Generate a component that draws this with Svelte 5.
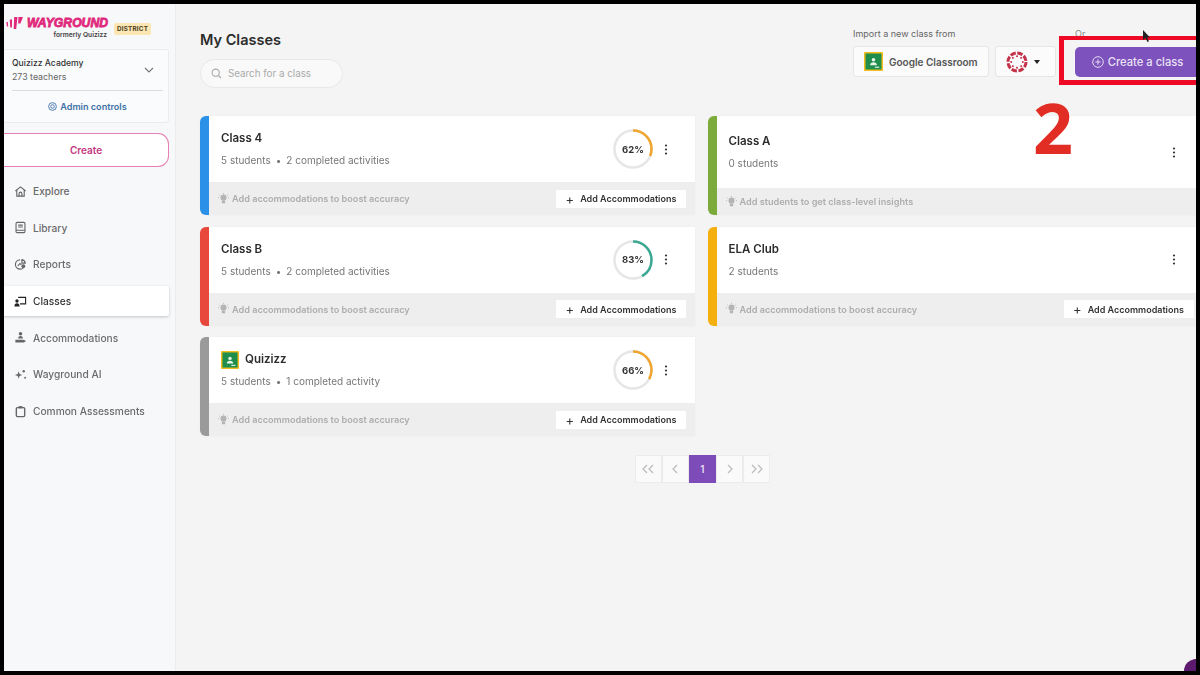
<script>
  const nav = [
    { label: 'Explore', icon: 'home' },
    { label: 'Library', icon: 'book' },
    { label: 'Reports', icon: 'report' },
    { label: 'Classes', icon: 'classes', active: true },
    { label: 'Accommodations', icon: 'acc' },
    { label: 'Wayground AI', icon: 'ai' },
    { label: 'Common Assessments', icon: 'clip' }
  ];
  const left = [
    { name: 'Class 4', color: '#2b90e8', meta: ['5 students', '2 completed activities'], pct: 62, ring: '#f0a52e', hint: 'Add accommodations to boost accuracy', add: true },
    { name: 'Class B', color: '#e8483c', meta: ['5 students', '2 completed activities'], pct: 83, ring: '#3aa893', hint: 'Add accommodations to boost accuracy', add: true },
    { name: 'Quizizz', color: '#9a9a9a', meta: ['5 students', '1 completed activity'], pct: 66, ring: '#f0a52e', hint: 'Add accommodations to boost accuracy', add: true, gc: true }
  ];
  const right = [
    { name: 'Class A', color: '#7cab3c', meta: ['0 students'], hint: 'Add students to get class-level insights', add: false },
    { name: 'ELA Club', color: '#f4b00e', meta: ['2 students'], hint: 'Add accommodations to boost accuracy', add: true }
  ];
  const circ = 2 * Math.PI * 18.5;
  const canvasDots = [0, 45, 90, 135, 180, 225, 270, 315];
</script>

{#snippet gcIcon(size)}
  <svg width={size} height={size} viewBox="0 0 20 20" class="gc">
    <rect width="20" height="20" rx="1" fill="#f2bd1d" />
    <rect x="1.6" y="1.6" width="16.8" height="16.8" fill="#1f8e4d" />
    <circle cx="10" cy="8.2" r="1.9" fill="#e8f3ea" />
    <path d="M6.4 14c0-2.2 1.6-3.2 3.6-3.2s3.6 1 3.6 3.2z" fill="#e8f3ea" />
    <rect x="11.5" y="15.4" width="4.5" height="1.2" fill="#e8f3ea" />
  </svg>
{/snippet}

{#snippet navIcon(k)}
  <svg width="13" height="13" viewBox="0 0 14 14" fill="none" stroke={k === 'classes' ? '#222' : '#666'} stroke-width="1.2">
    {#if k === 'home'}
      <path d="M1.5 6.5 7 2l5.5 4.5M3 5.5V12h8V5.5" /><path d="M5.5 12V9.2a1.5 1.5 0 0 1 3 0V12" />
    {:else if k === 'book'}
      <rect x="2.2" y="1.5" width="9.6" height="11" rx="1.2" /><path d="M4.5 4.5h5M4.5 6.5h5M2.2 10h9.6" />
    {:else if k === 'report'}
      <path d="M6.5 2a5 5 0 1 0 5 5.6" /><path d="M4 8.5 6.5 6l1.5 1.5" /><circle cx="10" cy="8.8" r="2" fill="#666" stroke="none" /><path d="M8.5 1.8A4.5 4.5 0 0 1 12.2 5.500H8.500z" />
    {:else if k === 'classes'}
      <path d="M4.500 2.500h8v7h-6" /><circle cx="3.200" cy="6.500" r="1.800" fill="#222" stroke="none" /><path d="M.5 12.500c0-2.500 1-3.500 2.700-3.500s2.800 1 2.800 3.500z" fill="#222" stroke="none" />
    {:else if k === 'acc'}
      <circle cx="7" cy="3" r="1.900" fill="#666" stroke="none" /><path d="M4.500 8c0-1.600 1.100-2.500 2.500-2.500S9.500 6.400 9.500 8z" fill="#666" stroke="none" /><path d="M1.500 9.500h8l3 .8c0 1.500-1.500 2.200-3 2.200h-8z" fill="#666" stroke="none" />
    {:else if k === 'ai'}
      <path d="M5 3.500 6 6.500l3 1-3 1-1 3-1-3-3-1 3-1z" fill="#666" stroke="none" /><circle cx="10.500" cy="3.500" r="1.300" fill="#666" stroke="none" /><circle cx="12" cy="10.500" r="1" fill="#666" stroke="none" />
    {:else}
      <rect x="2.500" y="2.800" width="9" height="9.700" rx="1.200" stroke-width="1.500" /><rect x="5" y="1.200" width="4" height="2.400" fill="#666" stroke="none" />
    {/if}
  </svg>
{/snippet}

{#snippet card(c)}
  <article class="card" style="--accent:{c.color}">
    <div class="top">
      <div class="info">
        <h3 class:withgc={c.gc}>{#if c.gc}{@render gcIcon(18)}{/if}{c.name}</h3>
        <p>{c.meta[0]}{#if c.meta[1]}<span class="dot">•</span>{c.meta[1]}{/if}</p>
      </div>
      {#if c.pct}
        <div class="ring">
          <svg width="42" height="42" viewBox="0 0 42 42">
            <circle cx="21" cy="21" r="18.500" fill="none" stroke="#e6e6e6" stroke-width="2.500" />
            <circle cx="21" cy="21" r="18.500" fill="none" stroke={c.ring} stroke-width="2.500" stroke-dasharray="{circ * c.pct / 200} {circ}" transform="rotate(-90 21 21)" />
          </svg>
          <span>{c.pct}%</span>
        </div>
      {/if}
      <svg class="kebab" width="4" height="11" viewBox="0 0 4 11"><circle cx="2" cy="1.500" r="1.100" /><circle cx="2" cy="5.500" r="1.100" /><circle cx="2" cy="9.500" r="1.100" /></svg>
    </div>
    <div class="foot" class:short={!c.add}>
      <svg width="11" height="12" viewBox="0 0 12 13" fill="#b4b4b4"><circle cx="6" cy="5" r="3.300" /><rect x="4.200" y="8.500" width="3.600" height="2.600" rx=".6" /><path d="M6 0v1M1 1.800l.8.700M11 1.800l-.8.700M0 5h1M11 5h1" stroke="#b4b4b4" /></svg>
      <span class="hint">{c.hint}</span>
      {#if c.add}
        <button class="add"><span class="plus">+</span>Add Accommodations</button>
      {/if}
    </div>
  </article>
{/snippet}

<div class="frame">
  <aside>
    <div class="logo">
      <svg width="17" height="14" viewBox="0 0 17 14" fill="#e0287c"><path d="M.3 6h1.500l.4 4.500H.9zM3.800 3.500h2.300l-.2 8H4.200zM8.200 1h3.300l-1.300 12H7.700zM12.500 1H17l-2.600 6.500h-2.300z" /></svg>
      <div class="wordmark">
        <strong>WAYGROUND</strong>
        <small>formerly Quizizz</small>
      </div>
      <span class="district">DISTRICT</span>
    </div>

    <div class="org">
      <div class="orgrow">
        <div>
          <div class="orgname">Quizizz Academy</div>
          <div class="orgsub">273 teachers</div>
        </div>
        <svg width="10" height="6" viewBox="0 0 10 6" fill="none" stroke="#777" stroke-width="1.100"><path d="M1 1l4 4 4-4" /></svg>
      </div>
      <div class="admin">
        <svg width="9" height="9" viewBox="0 0 10 10" fill="none" stroke="#3f72a8" stroke-width="1"><circle cx="5" cy="5" r="4.300" /><circle cx="5" cy="5" r="2" /></svg>
        Admin controls
      </div>
    </div>

    <button class="create">Create</button>

    <nav>
      {#each nav as n}
        <div class="navitem" class:active={n.active}>
          {@render navIcon(n.icon)}
          <span>{n.label}</span>
        </div>
      {/each}
    </nav>
  </aside>

  <main>
    <header>
      <div class="titlecol">
        <h1>My Classes</h1>
        <div class="search">
          <svg width="11" height="11" viewBox="0 0 11 11" fill="none" stroke="#aaa" stroke-width="1.100"><circle cx="4.700" cy="4.700" r="3.600" /><path d="M7.500 7.500 10 10" /></svg>
          Search for a class
        </div>
      </div>
      <div class="actions">
        <div class="impcol">
          <div class="caption">Import a new class from</div>
          <div class="imports">
            <button class="gcbtn">{@render gcIcon(19)}Google Classroom</button>
            <button class="canvas">
              <svg width="22" height="22" viewBox="0 0 22 22">
                <circle cx="11" cy="11" r="9" fill="none" stroke="#c4324a" stroke-width="3" stroke-dasharray="5.500 1.570" />
                {#each canvasDots as a}
                  <circle cx="11" cy="5.200" r="1" fill="#c4324a" transform="rotate({a} 11 11)" />
                {/each}
              </svg>
              <i class="caret"></i>
            </button>
          </div>
        </div>
        <div class="orcol">
          <div class="caption or">Or</div>
          <button class="primary">
            <svg width="12" height="12" viewBox="0 0 12 12" fill="none" stroke="#e6dcf3" stroke-width="1"><circle cx="6" cy="6" r="5.300" /><path d="M6 3.300v5.400M3.300 6h5.400" /></svg>
            Create a class
          </button>
        </div>
      </div>
    </header>

    <div class="grid">
      <div class="col">
        {#each left as c}{@render card(c)}{/each}
      </div>
      <div class="col">
        {#each right as c}{@render card(c)}{/each}
      </div>
    </div>

    <div class="pager">
      <button>
        <svg width="14" height="10" viewBox="0 0 14 10" fill="none" stroke="#bbb" stroke-width="1.200"><path d="M6 1 2 5l4 4M12 1 8 5l4 4" /></svg>
      </button>
      <button>
        <svg width="8" height="10" viewBox="0 0 8 10" fill="none" stroke="#bbb" stroke-width="1.200"><path d="M6 1 2 5l4 4" /></svg>
      </button>
      <button class="current">1</button>
      <button>
        <svg width="8" height="10" viewBox="0 0 8 10" fill="none" stroke="#bbb" stroke-width="1.200"><path d="m2 1 4 4-4 4" /></svg>
      </button>
      <button>
        <svg width="14" height="10" viewBox="0 0 14 10" fill="none" stroke="#bbb" stroke-width="1.200"><path d="m2 1 4 4-4 4M8 1l4 4-4 4" /></svg>
      </button>
    </div>

    <div class="highlight"></div>
    <div class="step">2</div>
    <svg class="cursor" width="9" height="13" viewBox="0 0 9 13"><path d="M0 0v10l2.500-2 2 4 1.500-.8-2-3.800H7z" fill="#222" /></svg>
    <div class="bubble"></div>
  </main>
</div>

<style>
  :global(body) { margin: 0; background: #000; }
  :global(*) { box-sizing: border-box; }
  .frame {
    width: 1200px; height: 675px; background: #000;
    padding: 4px; display: flex; overflow: hidden;
    font-family: Inter, "Liberation Sans", sans-serif;
    color: #333;
  }
  aside {
    width: 172px; flex: none; background: #f7f8fa;
    border-right: 1px solid #ececec; padding-right: 6px;
    display: flex; flex-direction: column;
    filter: blur(.35px);
  }
  .logo { display: flex; align-items: flex-start; height: 45px; padding: 12px 0 0 2px; }
  .wordmark { display: flex; flex-direction: column; margin-left: 4px; }
  .wordmark strong {
    font: italic 900 12.200px/14px "Liberation Sans", sans-serif; color: #e0287c;
    -webkit-text-stroke: .8px #e0287c;
  }
  .wordmark small { font-size: 6.700px; font-weight: 600; color: #444; line-height: 9px; text-align: right; padding-right: 1px; margin-top: 1px; }
  .district {
    font-size: 6.300px; font-weight: 700; color: #4a3c20; background: #fbe6b4;
    border-radius: 2px; padding: 2px 3px; margin: 7px 0 0 6px; letter-spacing: .2px;
  }
  .org {
    background: #fafbfc; border: 1px solid #ececef; border-left: 0;
    border-radius: 0 3px 3px 0; height: 74px; padding: 0 5px 0 8px;
  }
  .orgrow {
    display: flex; justify-content: space-between; align-items: center;
    height: 41px; border-bottom: 1px solid #ddd; padding-right: 9px;
  }
  .orgname { font-size: 8.600px; color: #333; font-weight: 500; line-height: 13px; }
  .orgsub { font-size: 8.800px; color: #666; line-height: 14px; }
  .admin {
    display: flex; align-items: center; justify-content: center; gap: 3px;
    height: 31px; font-size: 9.100px; font-weight: 600; color: #3f72a8;
  }
  .create {
    height: 34px; margin-top: 10px; background: #fff;
    border: 1px solid #e77fb4; border-left: 0; border-radius: 0 11px 11px 0;
    font: 600 10px Inter, sans-serif; color: #c3387f;
  }
  nav { display: flex; flex-direction: column; margin-top: 9px; }
  .navitem {
    height: 30px; margin-bottom: 6.700px; display: flex; align-items: center; gap: 6px;
    padding-left: 10px; font-size: 10.200px; color: #6b6b6b; font-weight: 500;
  }
  .navitem.active {
    background: #fff; color: #333; border-radius: 0 2px 2px 0;
    box-shadow: 0 1px 3px rgba(0,0,0,.22);
  }
  main {
    position: relative; flex: 1; min-width: 0; background: #f4f4f4;
    padding: 0 0 0 24px; overflow: hidden;
  }
  header { display: flex; justify-content: space-between; height: 112px; }
  .titlecol { padding-top: 27px; }
  h1 { margin: 0; font-size: 14.500px; line-height: 18px; font-weight: 600; color: #2c2c2c; }
  .search {
    margin-top: 10px; width: 143px; height: 29px; background: #f9f9f9;
    border: 1px solid #e8e8e8; border-radius: 15px; display: flex; align-items: center;
    gap: 6px; padding-left: 10px; font-size: 9.800px; color: #aaa;
  }
  .actions { display: flex; gap: 19px; padding-top: 25px; margin-right: -6px; }
  .caption { font-size: 9px; color: #666; line-height: 10px; height: 17px; }
  .or { height: 18px; color: #888; }
  .imports { display: flex; gap: 6px; }
  .gcbtn, .canvas {
    height: 31px; background: #fbfbfb; border: 1px solid #e6e6e6; border-radius: 3px;
    display: flex; align-items: center;
  }
  .gcbtn { width: 136px; gap: 6px; padding: 0 0 0 10px; font: 600 10px Inter, sans-serif; color: #555; }
  .canvas { width: 61px; padding: 0 0 0 10px; gap: 6px; }
  .caret { width: 0; height: 0; border: 3.500px solid transparent; border-top: 4px solid #222; border-bottom: 0; }
  .primary {
    width: 127px; height: 30px; background: #7d52bd; color: #e9e1f4; border: 0; border-radius: 5px 0 0 5px;
    display: flex; align-items: center; justify-content: center; gap: 4px; padding: 0 2px 0 0;
    font: 500 11.200px Inter, sans-serif;
  }
  .grid { display: grid; grid-template-columns: 495px 495px; column-gap: 12.500px; }
  .col { display: flex; flex-direction: column; gap: 11.500px; }
  .card {
    height: 99px; background: #fff; border-left: 9px solid var(--accent); border-radius: 6px 0 0 6px;
    display: flex; flex-direction: column; overflow: hidden;
    box-shadow: 0 0 2px rgba(0,0,0,.06);
    filter: blur(.3px);
  }
  .top { flex: 1; display: flex; align-items: center; padding: 0 28px 0 12px; }
  .info { flex: 1; }
  h3 { margin: 0; height: 15px; font-size: 11.500px; font-weight: 600; line-height: 15px; color: #2c2c2c; display: flex; align-items: center; }
  h3.withgc { gap: 6px; }
  .card p { margin: 8px 0 0; font-size: 10px; line-height: 13px; color: #777; }
  .dot { margin: 0 5px; }
  .ring { position: relative; width: 42px; height: 42px; margin-right: 9px; }
  .ring span {
    position: absolute; inset: 0; display: flex; align-items: center; justify-content: center;
    font-size: 9.500px; font-weight: 700; color: #333;
  }
  .kebab { fill: #333; margin-left: 1px; margin-right: -1px; }
  .foot {
    height: 33px; flex: none; background: #eeeeee; display: flex; align-items: center;
    padding: 0 9px; gap: 3px;
  }
  .foot.short { height: 27px; }
  .hint { flex: 1; font-size: 9.150px; font-weight: 600; color: #adadad; }
  .add {
    width: 130px; height: 18px; background: #fff; border: 0; border-radius: 1px; display: flex;
    align-items: center; justify-content: center; gap: 6px;
    font: 600 9px Inter, sans-serif; color: #333; padding: 0;
  }
  .plus { font-size: 13px; font-weight: 400; line-height: 10px; }
  .pager { display: flex; margin: 19px 0 0 434.500px; }
  .pager button {
    width: 27.200px; height: 28px; padding: 0; background: #fafafa; border: 1px solid #ececec;
    display: flex; align-items: center; justify-content: center;
    font: 600 10px Inter, sans-serif;
  }
  .pager .current { background: #7d4cb8; border-color: #7d4cb8; color: #e4d9f0; }
  .highlight {
    position: absolute; left: 883px; top: 32px; width: 137px; height: 49px;
    border: 5px solid #ee0a24; border-top-width: 4px; border-right-width: 0;
  }
  .step {
    position: absolute; left: 857px; top: 88px; font: 700 70px/70px "Open Sans", sans-serif; color: #e12d24;
  }
  .cursor { position: absolute; left: 967px; top: 26px; }
  .bubble {
    position: absolute; right: -12px; bottom: -12px; width: 24px; height: 24px; border-radius: 50%;
    background: #5b1a6e;
  }
</style>
